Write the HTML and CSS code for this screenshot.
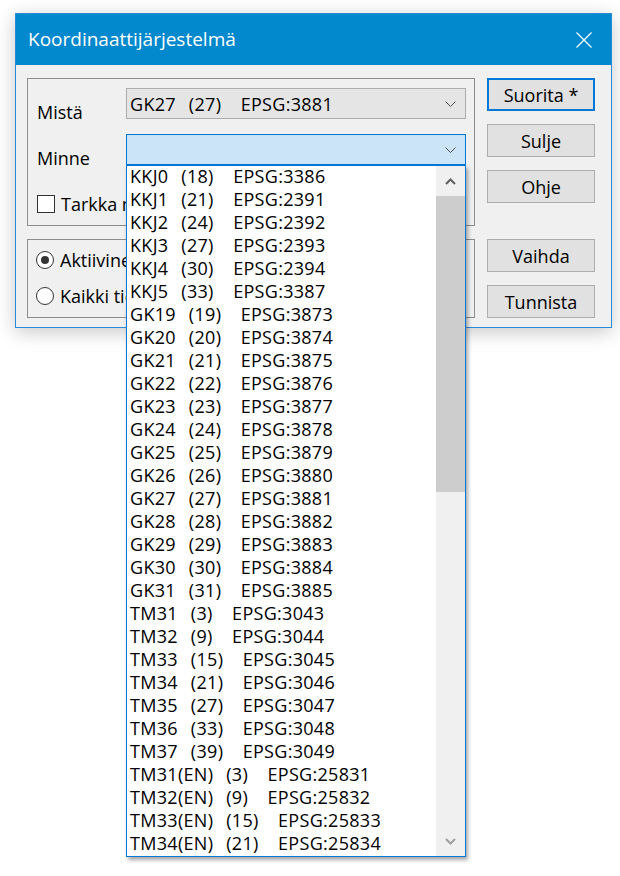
FILE: index.html
```html
<!DOCTYPE html>
<html lang="fi">
<head>
  <meta charset="UTF-8">
  <title>Koordinaattijärjestelmä</title>
  <link rel="stylesheet" href="styles.css">
</head>
<body>
  <div class="window">
    <div class="titlebar">
      <span class="title">Koordinaattijärjestelmä</span>
      <svg class="close-icon" width="16" height="16" viewBox="0 0 16 16">
        <path d="M0.5 0.5 L15.5 15.5 M15.5 0.5 L0.5 15.5" stroke="#fff" stroke-width="1.2" fill="none"/>
      </svg>
    </div>

    <div class="client">
      <div class="row">
        <div class="group group-crs">
          <div class="field">
            <span class="field-label">Mistä</span>
            <div class="combo">
              <span class="combo-text">GK27  (27)   EPSG:3881</span>
              <svg class="combo-arrow" width="11" height="6" viewBox="0 0 11 6">
                <path d="M0.5 0.5 L5.5 5.5 L10.5 0.5" stroke="#505050" stroke-width="1" fill="none"/>
              </svg>
            </div>
          </div>
          <div class="field">
            <span class="field-label">Minne</span>
            <div class="combo combo-open">
              <span class="combo-text"></span>
              <svg class="combo-arrow" width="11" height="6" viewBox="0 0 11 6">
                <path d="M0.5 0.5 L5.5 5.5 L10.5 0.5" stroke="#505050" stroke-width="1" fill="none"/>
              </svg>

              <!-- open dropdown of the target system -->
              <div class="droplist">
                <ul class="droplist-items">
                  <li>KKJ0  (18)   EPSG:3386</li>
                  <li>KKJ1  (21)   EPSG:2391</li>
                  <li>KKJ2  (24)   EPSG:2392</li>
                  <li>KKJ3  (27)   EPSG:2393</li>
                  <li>KKJ4  (30)   EPSG:2394</li>
                  <li>KKJ5  (33)   EPSG:3387</li>
                  <li>GK19  (19)   EPSG:3873</li>
                  <li>GK20  (20)   EPSG:3874</li>
                  <li>GK21  (21)   EPSG:3875</li>
                  <li>GK22  (22)   EPSG:3876</li>
                  <li>GK23  (23)   EPSG:3877</li>
                  <li>GK24  (24)   EPSG:3878</li>
                  <li>GK25  (25)   EPSG:3879</li>
                  <li>GK26  (26)   EPSG:3880</li>
                  <li>GK27  (27)   EPSG:3881</li>
                  <li>GK28  (28)   EPSG:3882</li>
                  <li>GK29  (29)   EPSG:3883</li>
                  <li>GK30  (30)   EPSG:3884</li>
                  <li>GK31  (31)   EPSG:3885</li>
                  <li>TM31  (3)   EPSG:3043</li>
                  <li>TM32  (9)   EPSG:3044</li>
                  <li>TM33  (15)   EPSG:3045</li>
                  <li>TM34  (21)   EPSG:3046</li>
                  <li>TM35  (27)   EPSG:3047</li>
                  <li>TM36  (33)   EPSG:3048</li>
                  <li>TM37  (39)   EPSG:3049</li>
                  <li>TM31(EN)  (3)   EPSG:25831</li>
                  <li>TM32(EN)  (9)   EPSG:25832</li>
                  <li>TM33(EN)  (15)   EPSG:25833</li>
                  <li>TM34(EN)  (21)   EPSG:25834</li>
                </ul>
                <div class="scrollbar">
                  <div class="scroll-btn">
                    <svg width="11" height="7" viewBox="0 0 11 7">
                      <path d="M1 6 L5.5 1.5 L10 6" stroke="#606060" stroke-width="2" fill="none"/>
                    </svg>
                  </div>
                  <div class="scroll-track">
                    <div class="scroll-thumb"></div>
                  </div>
                  <div class="scroll-btn">
                    <svg width="11" height="7" viewBox="0 0 11 7">
                      <path d="M1 1 L5.5 5.5 L10 1" stroke="#a0a0a0" stroke-width="2" fill="none"/>
                    </svg>
                  </div>
                </div>
              </div>
            </div>
          </div>
          <label class="option">
            <span class="checkbox"></span>
            <span>Tarkka muunnos</span>
          </label>
        </div>

        <div class="buttons">
          <button class="btn btn-default">Suorita *</button>
          <button class="btn">Sulje</button>
          <button class="btn">Ohje</button>
        </div>
      </div>

      <div class="row">
        <div class="group group-scope">
          <label class="option">
            <span class="radio radio-checked"></span>
            <span>Aktiivinen karttataso</span>
          </label>
          <label class="option">
            <span class="radio"></span>
            <span>Kaikki tiedostot</span>
          </label>
        </div>

        <div class="buttons">
          <button class="btn">Vaihda</button>
          <button class="btn">Tunnista</button>
        </div>
      </div>
    </div>
  </div>
</body>
</html>
```

FILE: styles.css
```css
html, body {
  margin: 0;
  padding: 0;
  background: #fff;
  font-family: 'Open Sans', 'Noto Sans', sans-serif;
  font-size: 18px;
  color: #000;
}
body {
  min-height: 876px;
  box-sizing: border-box;
  padding: 13px 0 0 15px;
}

/* dialog frame */
.window {
  width: 597px;
  border: 1px solid #2b8ad6;
  background: #f0f0f0;
  box-shadow: 0 4px 18px rgba(0,0,0,0.22);
  box-sizing: border-box;
}
.titlebar {
  height: 51px;
  background: #0288cc;
  display: flex;
  align-items: center;
  padding-left: 12px;
  color: #fff;
}
.title {
  font-size: 19px;
  flex: 1;
  padding-bottom: 1px;
}
.close-icon {
  margin-right: 19px;
}

.client {
  padding: 13px 16px 9px 11px;
  display: flex;
  flex-direction: column;
  gap: 13px;
}
.row {
  display: flex;
  gap: 12px;
  align-items: flex-start;
}

/* group boxes */
.group {
  width: 448px;
  box-sizing: border-box;
  border: 1px solid #8c8c8c;
}
.group-crs {
  height: 148px;
  padding: 9px 8px 0 9px;
}
.group-scope {
  height: 79px;
  padding: 8px 8px 0 8px;
  display: flex;
  flex-direction: column;
  gap: 12px;
}

.field {
  display: flex;
  align-items: flex-start;
  height: 31px;
  margin-bottom: 15px;
}
.field-label {
  width: 89px;
  line-height: 24px;
  margin-top: 12px;
}

/* drop-down combo boxes */
.combo {
  position: relative;
  width: 340px;
  height: 31px;
  box-sizing: border-box;
  border: 1px solid #adadad;
  background: #e5e5e5;
  display: flex;
  align-items: center;
  padding-left: 3px;
}
.combo-open {
  border-color: #0078d7;
  background: #cce4f7;
}
.combo-text {
  flex: 1;
  white-space: pre;
  line-height: 24px;
  letter-spacing: 0.3px;
  word-spacing: 1.5px;
}
.combo-arrow {
  margin-right: 9px;
}

.droplist {
  position: absolute;
  top: calc(100% + 1px);
  left: -1px;
  right: -1px;
  z-index: 10;
  display: flex;
  background: #fff;
  border: 1px solid #0078d7;
  box-shadow: 2px 3px 4px rgba(0,0,0,0.35);
}
.droplist-items {
  flex: 1;
  list-style: none;
  margin: 0;
  padding: 0;
}
.droplist-items li {
  height: 23px;
  line-height: 20px;
  padding-left: 3px;
  white-space: pre;
  letter-spacing: 0.3px;
  word-spacing: 1.5px;
}

.scrollbar {
  width: 29px;
  display: flex;
  flex-direction: column;
  background: #f0f0f0;
}
.scroll-btn {
  height: 30px;
  display: flex;
  align-items: center;
  justify-content: center;
}
.scroll-track {
  flex: 1;
}
.scroll-thumb {
  height: 296px;
  background: #cdcdcd;
}

/* check box and radio buttons */
.option {
  display: flex;
  align-items: center;
  gap: 6px;
  line-height: 24px;
}
.group-crs .option {
  margin-top: 27px;
}
.checkbox,
.radio {
  width: 18px;
  height: 18px;
  box-sizing: border-box;
  border: 1px solid #333;
  background: #fff;
  flex-shrink: 0;
}
.radio {
  border-radius: 50%;
  display: flex;
  align-items: center;
  justify-content: center;
}
.radio-checked::after {
  content: "";
  width: 8px;
  height: 8px;
  border-radius: 50%;
  background: #333;
}

/* command buttons */
.buttons {
  width: 108px;
  display: flex;
  flex-direction: column;
  gap: 13px;
}
.btn {
  height: 33px;
  box-sizing: border-box;
  border: 1px solid #adadad;
  background: #e1e1e1;
  font-family: inherit;
  font-size: 18px;
  color: #000;
  padding: 0;
}
.btn-default {
  border: 2px solid #0078d7;
}
```
